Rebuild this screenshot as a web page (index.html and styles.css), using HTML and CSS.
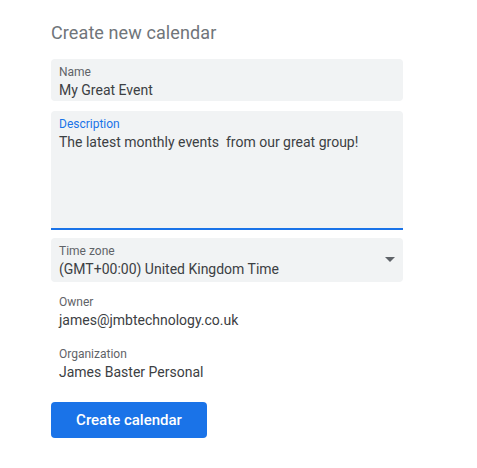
FILE: index.html
```html
<!DOCTYPE html>
<html>
<head>
<meta charset="utf-8">
<link rel="stylesheet" href="styles.css">
</head>
<body>
<div class="page">
  <h1 class="title">Create new calendar</h1>
  <div class="field field-name">
    <div class="label">Name</div>
    <div class="value">My Great Event</div>
  </div>
  <div class="field field-desc">
    <div class="label label-active">Description</div>
    <div class="value">The latest monthly events&nbsp; from our great group!</div>
  </div>
  <div class="field field-tz">
    <div class="tz-text">
      <div class="label">Time zone</div>
      <div class="value">(GMT+00:00) United Kingdom Time</div>
    </div>
    <svg class="arrow" width="10" height="5" viewBox="0 0 10 5"><path d="M0 0 L5 5 L10 0 Z" fill="#5f6368"/></svg>
  </div>
  <div class="info info-owner">
    <div class="label">Owner</div>
    <div class="value">james@jmbtechnology.co.uk</div>
  </div>
  <div class="info info-org">
    <div class="label">Organization</div>
    <div class="value">James Baster Personal</div>
  </div>
  <button class="btn">Create calendar</button>
</div>
</body>
</html>
```

FILE: styles.css
```css
html, body {
  margin: 0;
  padding: 0;
  background: #ffffff;
}
body {
  font-family: Roboto, "Liberation Sans", Arial, sans-serif;
}
.page {
  padding: 21px 0 0 51px;
  width: 352px;
  display: flex;
  flex-direction: column;
  align-items: stretch;
}
.title {
  margin: 0;
  font-size: 18px;
  line-height: 24px;
  font-weight: 400;
  color: #70757a;
  letter-spacing: 0.1px;
}
.field {
  background: #f1f3f4;
  border-radius: 4px;
  padding: 6px 8px 0 8px;
  box-sizing: border-box;
}
.field-name {
  margin-top: 14px;
  height: 42px;
}
.field-desc {
  margin-top: 10px;
  height: 119px;
  border-bottom: 2px solid #1a73e8;
  border-radius: 4px 4px 0 0;
}
.field-tz {
  margin-top: 8px;
  height: 44px;
  display: flex;
  align-items: flex-start;
  justify-content: space-between;
  padding-right: 8px;
}
.arrow {
  margin-top: 13px;
}
.label {
  font-size: 12px;
  line-height: 15px;
  color: #5f6368;
}
.label-active {
  color: #1a73e8;
}
.value {
  font-size: 14px;
  line-height: 20px;
  color: #3c4043;
}
.info {
  padding: 0 8px;
}
.info-owner {
  margin-top: 13px;
}
.info-org {
  margin-top: 17px;
}
.btn {
  margin-top: 20px;
  align-self: flex-start;
  height: 36px;
  width: 156px;
  background: #1a73e8;
  border: none;
  border-radius: 4px;
  color: #ffffff;
  font-family: Roboto, "Liberation Sans", Arial, sans-serif;
  font-size: 15px;
  font-weight: 500;
  letter-spacing: 0;
  padding: 0;
}
```
